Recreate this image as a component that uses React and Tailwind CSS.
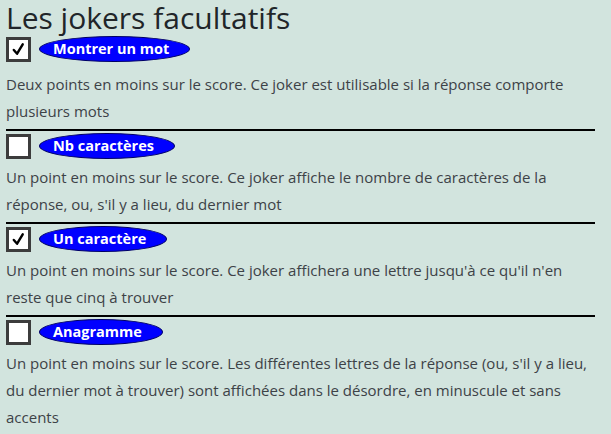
import React from 'react';

const jokers = [
  {
    label: 'Montrer un mot',
    checked: true,
    text: 'Deux points en moins sur le score. Ce joker est utilisable si la réponse comporte plusieurs mots',
  },
  {
    label: 'Nb caractères',
    checked: false,
    text: "Un point en moins sur le score. Ce joker affiche le nombre de caractères de la réponse, ou, s'il y a lieu, du dernier mot",
  },
  {
    label: 'Un caractère',
    checked: true,
    text: "Un point en moins sur le score. Ce joker affichera une lettre jusqu'à ce qu'il n'en reste que cinq à trouver",
  },
  {
    label: 'Anagramme',
    checked: false,
    text: "Un point en moins sur le score. Les différentes lettres de la réponse (ou, s'il y a lieu, du dernier mot à trouver) sont affichées dans le désordre, en minuscule et sans accents",
  },
];

const Check = () => (
  <svg viewBox="0 0 16 16" className="h-[15px] w-[15px]">
    <path d="M3 8.5 L6.5 12.5 L12.5 2.5" fill="none" stroke="#000" strokeWidth="2.6" strokeLinecap="round" strokeLinejoin="round" />
  </svg>
);

export default function App() {
  return (
    <div className="min-h-screen bg-[#d2e4de] px-[6px] text-[#3d4247] font-['Segoe_UI','Open_Sans',sans-serif] overflow-hidden">
      <h1 className="text-[30px] leading-[36px] -mb-[2px] text-[#212529]">Les jokers facultatifs</h1>
      {jokers.map((j, i) => (
        <div key={j.label} className={i > 0 ? 'border-t-2 border-black w-[589px]' : 'w-[589px]'}>
          <div className="flex items-center gap-[8px] h-[30px]">
            <div className="h-[25px] w-[25px] border-[3px] border-[#3c3c3c] bg-white flex items-center justify-center">
              {j.checked && <Check />}
            </div>
            <div className="h-[26px] rounded-[50%] bg-[#0000ff] border border-[#000066] pl-[13px] pr-[20px] flex items-center text-white font-bold text-[14.5px]">
              {j.label}
            </div>
          </div>
          <p className={i === 0 ? 'text-[15px] leading-[27px] pt-[7px] pb-[4px]' : 'text-[15px] leading-[27px] pt-[3px] pb-[4px]'}>{j.text}</p>
        </div>
      ))}
    </div>
  );
}
